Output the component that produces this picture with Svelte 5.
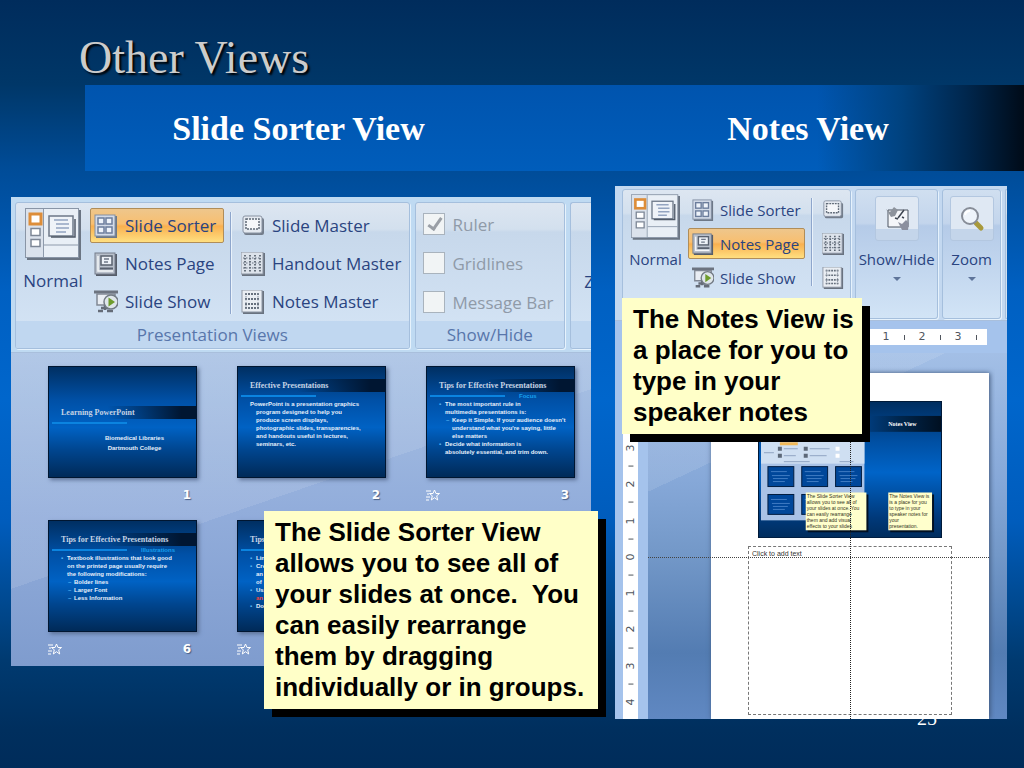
<script lang="ts">
  type Line = { text: string; level: number; mark?: string; warn?: boolean };
  type Thumb = {
    title: string;
    subtitle?: string;
    cover?: boolean;
    animated?: boolean;
    label?: string;
    lines: Line[];
  };

  const thumbs: Thumb[] = [
    {
      title: "Learning PowerPoint",
      cover: true,
      label: "1",
      lines: [
        { text: "Biomedical Libraries", level: 0 },
        { text: "Dartmouth College", level: 0 }
      ]
    },
    {
      title: "Effective Presentations",
      label: "2",
      lines: [
        { text: "PowerPoint is a presentation graphics", level: 0 },
        { text: "program designed to help you", level: 1 },
        { text: "produce screen displays,", level: 1 },
        { text: "photographic slides, transparencies,", level: 1 },
        { text: "and handouts useful in lectures,", level: 1 },
        { text: "seminars, etc.", level: 1 }
      ]
    },
    {
      title: "Tips for Effective Presentations",
      subtitle: "Focus",
      animated: true,
      label: "3",
      lines: [
        { text: "The most important rule in", level: 1, mark: "▪" },
        { text: "multimedia presentations is:", level: 1 },
        { text: "Keep it Simple. If your audience doesn't", level: 2, mark: "–" },
        { text: "understand what you're saying, little", level: 2 },
        { text: "else matters", level: 2 },
        { text: "Decide what information is", level: 1, mark: "▪" },
        { text: "absolutely essential, and trim down.", level: 1 }
      ]
    },
    {
      title: "Tips for Effective Presentations",
      subtitle: "Illustrations",
      animated: true,
      label: "6",
      lines: [
        { text: "Textbook illustrations that look good", level: 1, mark: "▪" },
        { text: "on the printed page usually require", level: 1 },
        { text: "the following modifications:", level: 1 },
        { text: "Bolder lines", level: 2, mark: "–" },
        { text: "Larger Font", level: 2, mark: "–" },
        { text: "Less Information", level: 2, mark: "–" }
      ]
    },
    {
      title: "Tips",
      animated: true,
      lines: [
        { text: "Lin", level: 1, mark: "▪" },
        { text: "Cre", level: 1, mark: "▪" },
        { text: "an", level: 1 },
        { text: "of", level: 1 },
        { text: "Us", level: 1, mark: "▪" },
        { text: "an", level: 1, warn: true },
        { text: "Do", level: 1, mark: "▪" }
      ]
    }
  ];

  const views = [
    { name: "Slide Sorter", icon: "sorter" },
    { name: "Notes Page", icon: "notes" },
    { name: "Slide Show", icon: "show" }
  ];

  const masters = [
    { name: "Slide Master", icon: "slide-master" },
    { name: "Handout Master", icon: "handout-master" },
    { name: "Notes Master", icon: "notes-master" }
  ];

  const toggles = [
    { name: "Ruler", checked: true },
    { name: "Gridlines", checked: false },
    { name: "Message Bar", checked: false }
  ];

  const across = ["1", "", "2", "", "3", ""];
  const down = ["3", "", "2", "", "1", "", "0", "", "1", "", "2", "", "3", "", "4"];

  const miniThumbs = [
    [10, 66], [44, 66], [78, 66],
    [10, 94], [44, 94]
  ];
  const miniNotes = [
    {
      x: 48,
      w: 61,
      lines: ["The Slide Sorter View", "allows you to see all of", "your slides at once. You", "can easily rearrange", "them and add visual", "effects to your slides"]
    },
    {
      x: 131,
      w: 44,
      lines: ["The Notes View is", "is a place for you", "to type in your", "speaker notes for", "your", "presentation."]
    }
  ];
</script>

{#snippet icon(name: string)}
  <svg class="icon" viewBox="0 0 24 24" aria-hidden="true">
    {#if name === "sorter"}
      <rect x="2" y="2" width="21" height="22" fill="#6d7887" />
      <rect x="1" y="1" width="20" height="21" fill="#d3dbe8" stroke="#8390a4" />
      {#each [[4, 4], [12, 4], [4, 13], [12, 13]] as [x, y]}
        <rect {x} {y} width="6" height="6" fill="#eef3fa" stroke="#6c7d9c" stroke-width="1.5" />
      {/each}
    {:else if name === "notes"}
      <rect x="2" y="2" width="21" height="22" fill="#565d69" />
      <rect x="1" y="1" width="20" height="21" fill="#b9c0cb" stroke="#757d8b" />
      <rect x="7" y="4" width="11" height="9" fill="#edf1f7" stroke="#59616f" stroke-width="1.5" />
      <path d="M10 7h5M10 10h4" stroke="#6f7888" stroke-width="1.3" />
      <path d="M4 4v15h15" fill="none" stroke="#f4f6f9" stroke-width="1.5" />
      <path d="M6 16.500h13" stroke="#59616f" stroke-width="2" />
    {:else if name === "show"}
      <path d="M0 2h24" stroke="#6d7480" stroke-width="3" />
      <path d="M3 4h18v11H3z" fill="#e9edf3" stroke="#818894" stroke-width="1.5" />
      <path d="M11 15v5M4 21h5M13 21h6M7 18h9" stroke="#656c78" stroke-width="2.5" />
      <circle cx="17" cy="12" r="7" fill="#dfe6ea" stroke="#737b85" stroke-width="1.5" />
      <path d="M14.500 7.500v9l6.500-4.500z" fill="#6f9c2c" />
    {:else if name === "slide-master"}
      <rect x="3" y="4" width="20" height="17" rx="2" fill="#737d8b" />
      <rect x="2" y="2" width="19" height="17" rx="2" fill="#e4e9f0" stroke="#8993a3" />
      <rect x="5" y="5" width="13" height="10" fill="#f5f7fa" stroke="#5f6976" stroke-width="1.5" stroke-dasharray="2 1" />
    {:else if name === "handout-master"}
      <rect x="1" y="1" width="23" height="23" fill="#69727f" />
      <rect x="0" y="0" width="22" height="22" fill="#dde3eb" stroke="#8d96a4" />
      <path d="M4 3v17M9 3v17M14 3v17M19 3v17" stroke="#5b6572" stroke-width="1.8" stroke-dasharray="1.500 1.500" />
      <path d="M2 6h18M2 11h18M2 16h18" stroke="#6b7583" stroke-width="1.2" stroke-dasharray="1.500 1.500" />
    {:else if name === "notes-master"}
      <rect x="2" y="1" width="21" height="23" fill="#69727f" />
      <rect x="1" y="0" width="20" height="22" fill="#eaeef3" stroke="#8d96a4" />
      <path d="M4 4h14M4 9h14M4 14h14M4 18h14" stroke="#66707d" stroke-width="1.800" stroke-dasharray="2 1" />
      <path d="M5 3v16M17 3v16" stroke="#8a93a0" stroke-dasharray="1.500 1.500" />
    {/if}
  </svg>
{/snippet}

{#snippet normalView()}
  <button class="normal">
    <svg viewBox="0 0 56 52" aria-hidden="true">
      <rect x="2" y="2" width="54" height="50" fill="#6b7583" />
      <rect x="0.500" y="0.500" width="53" height="49" fill="#e9eff6" stroke="#8995a6" />
      <rect x="1" y="1" width="17" height="48" fill="#dbe2ec" />
      <path d="M18.500 1v48M19 37h34" stroke="#8e9aab" />
      <rect x="5" y="6" width="11" height="10" fill="#fff" stroke="#dd8d39" stroke-width="3" />
      <path d="M6 20.500h9v7H6zM6 31.500h9v7H6z" fill="#fff" stroke="#7d8796" stroke-width="1.500" />
      <rect x="24" y="8" width="24" height="20" fill="#eff3f8" stroke="#6d7888" stroke-width="1.500" />
      <path d="M26 29h24V11" fill="none" stroke="#4f5967" stroke-width="1.500" />
      <path d="M29 12h14M31 16h13M31 20h13M31 24h10" stroke="#93a4c0" stroke-width="1.500" />
    </svg>
    <span>Normal</span>
  </button>
{/snippet}

{#snippet viewButtons(active: string)}
  <div class="commands main-views">
    {#each views as v}
      <button class="command" class:active={v.name === active}>
        {@render icon(v.icon)}<span>{v.name}</span>
      </button>
    {/each}
  </div>
{/snippet}

<main class="slide">
  <h1>Other Views</h1>

  <div class="band">
    <h2>Slide Sorter View</h2>
    <h2>Notes View</h2>
  </div>

  <div class="panels">
    <section class="panel sorter">
      <div class="ribbon">
        <div class="group views">
          <div class="group-body">
            {@render normalView()}
            {@render viewButtons("Slide Sorter")}
            <div class="divider"></div>
            <div class="commands">
              {#each masters as m}
                <button class="command">{@render icon(m.icon)}<span>{m.name}</span></button>
              {/each}
            </div>
          </div>
          <div class="group-name">Presentation Views</div>
        </div>
        <div class="group toggles">
          <div class="group-body checks">
            {#each toggles as t}
              <label><input type="checkbox" checked={t.checked} disabled />{t.name}</label>
            {/each}
          </div>
          <div class="group-name">Show/Hide</div>
        </div>
        <div class="group cut">
          <div class="group-body"><button class="zoom-cut">Zoom</button></div>
          <div class="group-name"></div>
        </div>
      </div>

      <div class="thumbs">
        {#each thumbs as t}
          <figure>
            <div class="thumb" class:cover={t.cover}>
              <div class="thumb-title">{t.title}</div>
              <div class="thumb-rule"><i></i><span>{t.subtitle ?? ""}</span></div>
              <div class="thumb-text">
                {#each t.lines as line}
                  <p class="level{line.level}" class:warn={line.warn}>
                    {#if line.mark}<b class="mark">{line.mark}</b>{/if}{line.text}
                  </p>
                {/each}
              </div>
            </div>
            <figcaption>
              {#if t.animated}
                <svg class="star" viewBox="0 0 14 12" aria-hidden="true">
                  <path d="M0 2h5M1 5h2M0 8h4M0 11h3" stroke="#fff" />
                  <path d="M8.500 1l1.500 3.500h3.500l-2.800 2.300 1 4.200-3.200-2.300-3.200 2.300 1-4.200L3.500 4.500H7z" fill="none" stroke="#fff" />
                </svg>
              {/if}
              <span>{t.label ?? ""}</span>
            </figcaption>
          </figure>
        {/each}
      </div>

      <div class="callout">
        The Slide Sorter View<br />allows you to see all of<br />your slides at once.&nbsp; You<br />can easily rearrange<br />them by dragging<br />individually or in groups.
      </div>
    </section>

    <section class="panel notes">
      <div class="ribbon compact">
        <div class="group views">
          <div class="group-body">
            {@render normalView()}
            {@render viewButtons("Notes Page")}
            <div class="divider"></div>
            <div class="commands">
              {#each masters as m}
                <button class="command" aria-label={m.name}>{@render icon(m.icon)}</button>
              {/each}
            </div>
          </div>
        </div>
        <div class="group show-hide">
          <button class="big">
            <span class="tile">
              <svg viewBox="0 0 26 26" aria-hidden="true">
                <path d="M4 4h20v17H4z" fill="#f4f6f9" stroke="#4d5461" />
                <path d="M2 3l4 3 4-5 4 3-3 6-4 1z" fill="#8d939c" />
                <path d="M20 4l-6 8M11 12l3 1M18 11l2 1" stroke="#3d4450" stroke-width="1.500" />
                <path d="M14 16l4 2 4-4 3 3-1 7h-6z" fill="#8b8f9e" />
              </svg>
            </span>
            <span>Show/Hide</span>
            <i class="arrow"></i>
          </button>
        </div>
        <div class="group zoom">
          <button class="big">
            <span class="tile">
              <svg viewBox="0 0 26 26" aria-hidden="true">
                <path d="M17 17l5 5" stroke="#a99a3c" stroke-width="5" stroke-linecap="round" />
                <circle cx="11" cy="10" r="8" fill="#eef4fb" stroke="#878d98" stroke-width="2" />
                <path d="M6 9a5 5 0 0 1 5-4" fill="none" stroke="#fff" stroke-width="2" />
              </svg>
            </span>
            <span>Zoom</span>
            <i class="arrow"></i>
          </button>
        </div>
        <div class="group cut"></div>
      </div>

      <div class="ruler-row">
        <div class="ruler-across">
          {#each across as mark}
            <span>{#if mark}{mark}{:else}<i></i>{/if}</span>
          {/each}
        </div>
      </div>

      <div class="workspace">
        <div class="ruler-down">
          <div class="marks">
            {#each down as mark}
              <span>{#if mark}{mark}{:else}<i></i>{/if}</span>
            {/each}
          </div>
        </div>
        <div class="canvas">
          <div class="page">
            <svg class="mini" viewBox="0 0 185 138" role="img" aria-label="Slide preview">
              <defs>
                <linearGradient id="mini-bg" x1="0" y1="0" x2="0" y2="1">
                  <stop offset="0" stop-color="#002d5e" />
                  <stop offset="0.300" stop-color="#0050a4" />
                  <stop offset="0.520" stop-color="#0064c8" />
                  <stop offset="0.850" stop-color="#00397a" />
                  <stop offset="1" stop-color="#002c5c" />
                </linearGradient>
                <linearGradient id="mini-band">
                  <stop offset="0" stop-color="#00438c" />
                  <stop offset="0.500" stop-color="#00264d" />
                  <stop offset="1" stop-color="#000f20" />
                </linearGradient>
              </defs>
              <rect width="185" height="138" fill="url(#mini-bg)" />
              <rect x="100" y="15" width="85" height="16" fill="url(#mini-band)" />
              <text class="mini-head" x="131" y="25">Notes View</text>
              <rect x="3" y="36" width="104" height="84" fill="#a9c2e6" />
              <rect x="3" y="36" width="104" height="27" fill="#cfdff2" />
              <path d="M22 43h18" stroke="#f0b95a" stroke-width="3" />
              <path d="M20 48h4M20 55h4M46 48h4M46 55h4" stroke="#5c6878" stroke-width="4" />
              <path d="M6 52h10M26 48h14M26 55h12M52 48h20M52 55h17M26 61h26M82 61h14" stroke="#8fa3c2" />
              <path d="M78 48h4M78 55h4" stroke="#fff" stroke-width="4" />
              {#each miniThumbs as [x, y]}
                <rect {x} {y} width="26" height="20" fill="#00479a" stroke="#001c40" />
                <path d="M{x + 3} {y + 5}h16M{x + 4} {y + 9}h18M{x + 5} {y + 12}h15M{x + 5} {y + 15}h12" stroke="#3f7cc4" />
              {/each}
              {#each miniNotes as note}
                <rect x={note.x + 2} y="94" width={note.w} height="38" fill="#001022" />
                <rect x={note.x} y="92" width={note.w} height="38" fill="#ffffcc" />
                {#each note.lines as line, i}
                  <text class="mini-note" x={note.x + 1} y={98 + i * 6}>{line}</text>
                {/each}
              {/each}
              <rect x="0.500" y="0.500" width="184" height="137" fill="none" stroke="#001a38" />
            </svg>
            <textarea aria-label="Notes" placeholder="Click to add text"></textarea>
            <div class="guide-v"></div>
          </div>
          <div class="guide-h"></div>
        </div>
      </div>

      <div class="callout">
        The Notes View is<br />a place for you to<br />type in your<br />speaker notes
      </div>
    </section>
  </div>

  <footer>25</footer>
</main>

<style>
  :global(body) {
    margin: 0;
    background: #002c5a;
  }

  .slide {
    min-height: 100vh;
    box-sizing: border-box;
    overflow: hidden;
    background: linear-gradient(
      #002c5c 0%,
      #003768 11%,
      #004c98 22%,
      #0060c2 38%,
      #0066cc 52%,
      #005cbc 68%,
      #004a92 78%,
      #003a70 86%,
      #002f5e 95%,
      #002c5a 100%
    );
  }

  h1 {
    box-sizing: border-box;
    height: 85px;
    margin: 0;
    padding: 31px 0 0 79px;
    font: 46px/54px "Liberation Serif", serif;
    color: #cccccc;
    text-shadow: 2px 2px 2px #000;
  }

  .band {
    display: grid;
    grid-template-columns: 427fr 386fr;
    column-gap: 103px;
    align-items: center;
    box-sizing: border-box;
    height: 86px;
    margin-left: 85px;
    padding: 2px 23px 0 0;
    background:
      linear-gradient(90deg, transparent 78%, #00427f 87%, #00264c 94%, #000b18 100%),
      linear-gradient(#0054ae, #005dbb);
  }

  h2 {
    margin: 0;
    font: bold 34px/40px "Liberation Serif", serif;
    color: #fff;
    text-align: center;
    white-space: nowrap;
  }

  .panels {
    position: relative;
    z-index: 1;
    display: grid;
    grid-template-columns: 580fr 392fr;
    column-gap: 24px;
    align-items: start;
    padding: 15px 17px 0 11px;
  }

  .panel {
    position: relative;
    min-width: 0;
    font-family: "Open Sans", "Noto Sans", sans-serif;
    color: #2a4480;
  }

  .sorter {
    margin-top: 11px;
  }

  .ribbon {
    display: flex;
    gap: 5px;
    box-sizing: border-box;
    height: 156px;
    padding: 5px 0 3px 4px;
    overflow: hidden;
    background: #bfdaf2;
    border-bottom: 1px solid #a9bfdc;
    font-size: 17px;
  }

  .group {
    display: flex;
    flex-direction: column;
    box-sizing: border-box;
    min-width: 0;
    overflow: hidden;
    border: 1px solid #a5bfdd;
    border-radius: 3px;
    background: linear-gradient(#dde6f1, #d3e0ee 18%, #c7d8eb 20%, #d5e5f6 100%);
    box-shadow: 1px 1px 0 #e6f2fc;
  }

  .views { flex: 396 1 0; }
  .toggles { flex: 150 1 0; }
  .cut {
    flex: 20 1 0;
    border-right: 0;
    border-radius: 3px 0 0 3px;
  }

  .group-body {
    display: flex;
    flex: 1;
    padding-top: 5px;
  }

  .group-name {
    height: 27px;
    background: #c0d7f0;
    color: #5876ab;
    line-height: 27px;
    text-align: center;
    white-space: nowrap;
  }

  button {
    margin: 0;
    padding: 0;
    border: 0;
    background: none;
    color: inherit;
    font: inherit;
    white-space: nowrap;
  }

  .normal {
    display: flex;
    flex: none;
    flex-direction: column;
    align-items: center;
    gap: 9px;
    width: 74px;
    line-height: 24px;
  }

  .normal svg {
    width: 56px;
    height: 52px;
  }

  .commands {
    display: flex;
    flex-direction: column;
    gap: 3px;
  }

  .main-views {
    min-width: 134px;
  }

  .command {
    display: flex;
    align-items: center;
    gap: 7px;
    box-sizing: border-box;
    height: 35px;
    padding: 0 3px;
    border: 1px solid transparent;
    border-radius: 2px;
  }

  .command.active {
    border-color: #b08d59;
    background: linear-gradient(#eec68c, #f8bf70 45%, #f9b050 52%, #ffdf80);
  }

  .icon {
    flex: none;
    width: 24px;
    height: 24px;
  }

  .divider {
    flex: none;
    width: 1px;
    height: 102px;
    margin: 4px 6px 0;
    background: #8ea6cc;
    box-shadow: 1px 0 0 #e9f2fb;
  }

  .checks {
    flex-direction: column;
    gap: 3px;
    padding: 3px 0 0 7px;
    color: #8f9aa8;
  }

  label {
    display: flex;
    align-items: center;
    gap: 8px;
    height: 36px;
    white-space: nowrap;
  }

  input {
    position: relative;
    flex: none;
    appearance: none;
    box-sizing: border-box;
    width: 22px;
    height: 22px;
    margin: 0;
    border: 1px solid #a9b3bd;
    background: #f1f4f5;
  }

  input:checked::before {
    content: "";
    position: absolute;
    left: 7px;
    top: 1px;
    width: 5px;
    height: 12px;
    border: solid #9a9fa6;
    border-width: 0 3px 3px 0;
    transform: rotate(35deg);
  }

  .zoom-cut {
    padding: 34px 0 0 13px;
  }

  .thumbs {
    display: grid;
    grid-template-columns: repeat(3, 1fr);
    gap: 8px 40px;
    box-sizing: border-box;
    padding: 13px 16px 0 37px;
    background:
      linear-gradient(161deg, rgba(255, 255, 255, 0.1) 46%, transparent 46%),
      linear-gradient(#a9c2e4, #92addb 50%, #7f9cce);
  }

  figure {
    min-width: 0;
    margin: 0;
  }

  .thumb {
    box-sizing: border-box;
    height: 112px;
    padding-top: 12px;
    overflow: hidden;
    border: 1px solid #001631;
    background: linear-gradient(#002f62, #0050a6 30%, #0062c4 55%, #004690 75%, #002a58);
    box-shadow: 2px 2px 4px #5c7196;
    color: #e6effa;
    font: bold 6px/8px "Liberation Sans", sans-serif;
    white-space: nowrap;
  }

  .cover {
    padding-top: 39px;
  }

  .thumb-title {
    height: 13px;
    padding-left: 12px;
    background: linear-gradient(90deg, transparent 40%, #001632 90%);
    color: #c5d3e4;
    font: bold 8px/13px "Liberation Serif", serif;
  }

  .thumb-rule {
    display: flex;
    align-items: center;
    gap: 14px;
    height: 8px;
    margin-left: 3px;
    color: #18a0ee;
  }

  .thumb-rule i {
    width: 75px;
    height: 2px;
    background: #0b84e0;
  }

  .thumb-text p {
    margin: 0;
    padding-left: 12px;
  }

  .thumb-text .level1 { padding-left: 18px; }
  .thumb-text .level2 { padding-left: 25px; }
  .thumb-text .warn { color: #f04040; }

  .mark {
    display: inline-block;
    width: 6px;
    margin-left: -6px;
    color: #59b6f2;
  }

  .cover .thumb-text {
    padding: 6px 0 0 12px;
    line-height: 10px;
    text-align: center;
  }

  figcaption {
    display: flex;
    align-items: center;
    justify-content: space-between;
    height: 34px;
    padding: 0 6px 0 0;
    color: #fff;
    font: bold 12px/34px "DejaVu Sans", sans-serif;
    text-shadow: 1px 1px 1px #4a5f85;
  }

  figcaption span {
    margin-left: auto;
  }

  .star {
    width: 14px;
    height: 12px;
  }

  .callout {
    position: absolute;
    box-sizing: border-box;
    padding: 6px 11px;
    background: #ffffc8;
    box-shadow: 8px 8px 0 #000;
    color: #000;
    font: bold 26px/31px "Liberation Sans", sans-serif;
    white-space: nowrap;
  }

  .sorter .callout {
    top: 314px;
    right: -7px;
    width: 334px;
  }

  .notes .callout {
    top: 112px;
    left: 7px;
    width: 240px;
  }

  .notes {
    background: #a5c3ec;
  }

  .compact {
    gap: 4px;
    height: 135px;
    padding: 3px 0 1px 7px;
    font-size: 15px;
    background: #c3d8f0;
  }

  .compact .views { flex: 232 1 0; }
  .compact .show-hide { flex: 83 1 0; }
  .compact .zoom { flex: 58 1 0; }
  .compact .cut { flex: 1 1 0; }

  .compact .show-hide,
  .compact .zoom {
    background: linear-gradient(#d0dff0, #c3d5ec 26%, #b5cbe8 28%, #d2e4f6 100%);
  }

  .compact .normal {
    width: 65px;
    line-height: 20px;
  }

  .compact .normal svg {
    width: 49px;
    height: 46px;
  }

  .compact .main-views {
    min-width: 0;
  }

  .compact .group-body {
    padding-top: 4px;
  }

  .compact .command {
    height: 31px;
    gap: 6px;
  }

  .compact .icon {
    width: 22px;
    height: 22px;
  }

  .compact .divider {
    height: 88px;
  }

  .big {
    display: flex;
    flex-direction: column;
    align-items: center;
    padding-top: 6px;
    line-height: 20px;
  }

  .tile {
    display: grid;
    place-items: center;
    box-sizing: border-box;
    width: 44px;
    height: 45px;
    margin-bottom: 8px;
    border: 1px solid #b3c7e0;
    border-radius: 3px;
    background: linear-gradient(#dfe8f3 75%, #c4d5ea 75%);
  }

  .tile svg {
    width: 26px;
    height: 26px;
  }

  .arrow {
    margin-top: 8px;
    border: 4px solid transparent;
    border-top-color: #5e7499;
    border-bottom: 0;
  }

  .ruler-row {
    box-sizing: border-box;
    height: 32px;
    padding: 8px 20px 8px 31%;
  }

  .ruler-across {
    display: flex;
    justify-content: flex-end;
    height: 16px;
    padding-right: 2px;
    background: #fff;
    color: #50565e;
    font: 11px/16px "DejaVu Sans", sans-serif;
  }

  .ruler-across span {
    display: grid;
    place-items: center;
    width: 18px;
  }

  .ruler-across i {
    width: 1px;
    height: 5px;
    background: #50565e;
  }

  .workspace {
    display: flex;
    gap: 10px;
    padding-left: 8px;
  }

  .ruler-down {
    display: flex;
    flex: none;
    flex-direction: column;
    justify-content: flex-end;
    box-sizing: border-box;
    width: 15px;
    padding-bottom: 8px;
    background: #fff;
    color: #50565e;
    font: 11px/15px "DejaVu Sans", sans-serif;
  }

  .marks {
    display: flex;
    flex-direction: column;
    height: 272px;
  }

  .marks span {
    display: grid;
    flex: 1;
    place-items: center;
    transform: rotate(-90deg);
  }

  .marks i {
    width: 1px;
    height: 5px;
    background: #50565e;
  }

  .canvas {
    position: relative;
    flex: 1;
    min-width: 0;
    padding: 20px 18px 0 63px;
    background:
      linear-gradient(155deg, rgba(255, 255, 255, 0.1) 26%, transparent 26%),
      linear-gradient(#a3bfe6, #86a8d8 35%, #7398c8 55%, #537cb2 82%, #6088c2);
  }

  .page {
    position: relative;
    box-sizing: border-box;
    height: 346px;
    padding: 28px 37px 0;
    background: #fff;
    box-shadow: 1px 0 5px #3d5478;
    clip-path: inset(-6px -6px 0 -6px);
  }

  .mini {
    display: block;
    margin: 0 10px;
  }

  .mini-head {
    font: bold 6px "Liberation Serif", serif;
    fill: #fff;
  }

  .mini-note {
    font: 5px "Liberation Sans", sans-serif;
    fill: #333320;
  }

  textarea {
    display: block;
    box-sizing: border-box;
    width: 100%;
    height: 169px;
    margin-top: 8px;
    padding: 2px 3px;
    border: 1px dashed #777;
    background: none;
    font: 7px/9px "Liberation Sans", sans-serif;
    resize: none;
  }

  textarea::placeholder {
    color: #333;
    opacity: 1;
  }

  .guide-v {
    position: absolute;
    top: 0;
    bottom: 0;
    left: 50%;
    border-left: 1px dotted #222;
  }

  .guide-h {
    position: absolute;
    top: 204px;
    left: 0;
    right: 18px;
    border-top: 1px dotted #444;
  }

  footer {
    height: 24px;
    margin: -13px 87px 0 0;
    color: #fff;
    font: 20px/24px "Liberation Serif", serif;
    text-align: right;
  }
</style>
